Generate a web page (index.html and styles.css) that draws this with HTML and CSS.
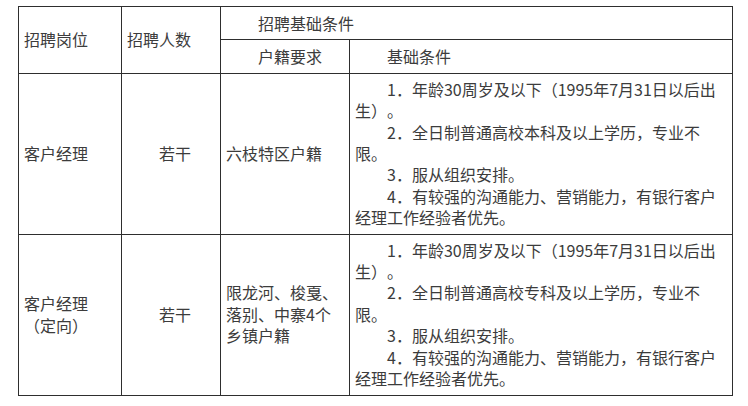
FILE: index.html
```html
<!DOCTYPE html>
<html lang="zh-CN">
<head>
<meta charset="utf-8">
<title>招聘岗位</title>
<link rel="stylesheet" href="styles.css">
</head>
<body>
<table class="jobs">
  <colgroup>
    <col class="c-post">
    <col class="c-num">
    <col class="c-huji">
    <col class="c-cond">
  </colgroup>
  <thead>
    <tr class="head-top">
      <th rowspan="2" class="left">招聘岗位</th>
      <th rowspan="2" class="left">招聘人数</th>
      <th colspan="2" class="ind">招聘基础条件</th>
    </tr>
    <tr class="head-sub">
      <th class="ind">户籍要求</th>
      <th class="ind">基础条件</th>
    </tr>
  </thead>
  <tbody>
    <tr>
      <td class="left">客户经理</td>
      <td class="ind">若干</td>
      <td class="left">六枝特区户籍</td>
      <td class="cond">
        <p>1．年龄30周岁及以下（1995年7月31日以后出生）。</p>
        <p>2．全日制普通高校本科及以上学历，专业不限。</p>
        <p>3．服从组织安排。</p>
        <p>4．有较强的沟通能力、营销能力，有银行客户经理工作经验者优先。</p>
      </td>
    </tr>
    <tr>
      <td class="left">客户经理<br>（定向）</td>
      <td class="ind">若干</td>
      <td class="left huji2">限龙河、梭戛、落别、中寨4个乡镇户籍</td>
      <td class="cond">
        <p>1．年龄30周岁及以下（1995年7月31日以后出生）。</p>
        <p>2．全日制普通高校专科及以上学历，专业不限。</p>
        <p>3．服从组织安排。</p>
        <p>4．有较强的沟通能力、营销能力，有银行客户经理工作经验者优先。</p>
      </td>
    </tr>
  </tbody>
</table>
</body>
</html>
```

FILE: styles.css
```css
html, body {
  margin: 0;
  background: #ffffff;
}

body {
  padding: 6px 0 0 18px;
  font-family: "Noto Sans CJK SC", "Noto Sans", sans-serif;
  font-size: 16px;
  color: #3c3c3c;
  text-spacing-trim: space-all;
}

.jobs {
  border-collapse: collapse;
  table-layout: fixed;
  width: 714px;
}

.c-post { width: 103px; }
.c-num { width: 99px; }
.c-huji { width: 129px; }
.c-cond { width: 383px; }

.jobs th,
.jobs td {
  border: 1px solid #2e2e2e;
  padding: 5px 5px;
  line-height: 21.4px;
  font-weight: normal;
  vertical-align: middle;
  text-align: left;
}

.jobs th {
  padding-top: 5.5px;
  padding-bottom: 5.5px;
}

.jobs .ind {
  text-indent: 2em;
}

.huji2 {
  line-height: 20.4px;
}

.cond p {
  margin: 0;
  text-indent: 2em;
}
```
